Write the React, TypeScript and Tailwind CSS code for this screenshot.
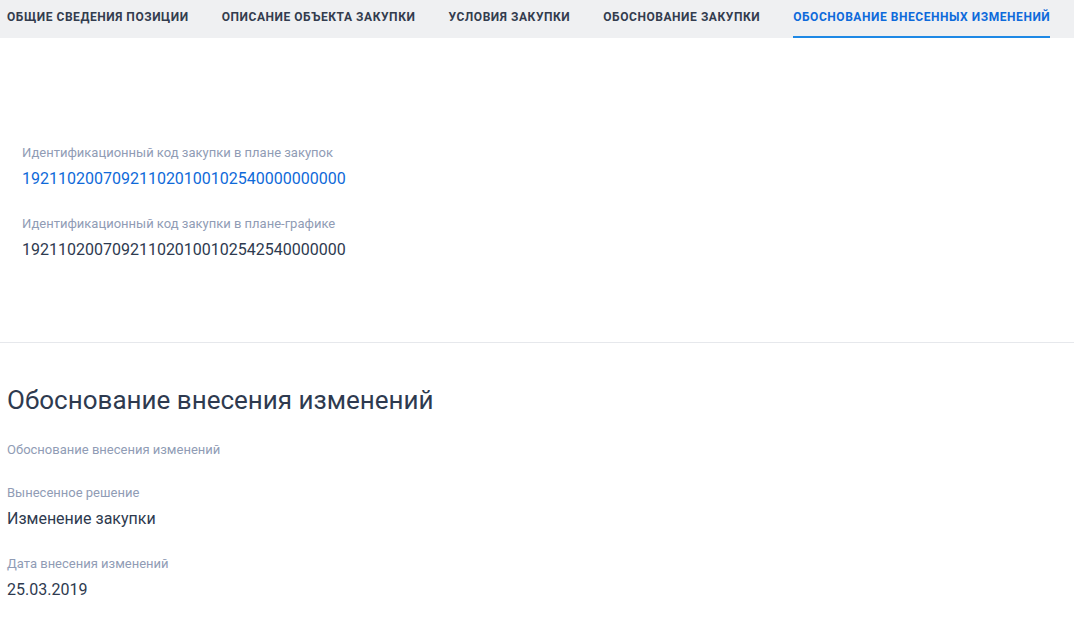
import React from "react";

const tabs = [
  "Общие сведения позиции",
  "Описание объекта закупки",
  "Условия закупки",
  "Обоснование закупки",
  "Обоснование внесенных изменений",
];

function Field({ label, value, blue }: { label: string; value?: string; blue?: boolean }) {
  return (
    <div>
      <div className="text-[13px] leading-[20px] text-[#909cb5]">{label}</div>
      {value && (
        <div className={`mt-[4px] text-[16px] leading-[24px] ${blue ? "text-[#0f6ad9]" : "text-[#2e3a4f]"}`}>
          {value}
        </div>
      )}
    </div>
  );
}

export default function App() {
  return (
    <div className="min-h-[633px] bg-white" style={{ fontFamily: "Roboto, 'Noto Sans', sans-serif" }}>
      <div className="flex h-[38px] bg-[#eff0f2] pl-[7px] gap-[33px]">
        {tabs.map((t, i) => (
          <div
            key={t}
            className={`flex h-full items-start pt-[9px] text-[12px] font-bold uppercase leading-[16px] tracking-[0.55px] ${
              i === 4 ? "text-[#0d6adb] border-b-2 border-[#1e88e5]" : "text-[#333c4e]"
            }`}
          >
            {t}
          </div>
        ))}
      </div>
      <div className="px-[22px] pt-[105px] pb-[80px] flex flex-col gap-[23px]">
        <Field label="Идентификационный код закупки в плане закупок" value="192110200709211020100102540000000000" blue />
        <Field label="Идентификационный код закупки в плане-графике" value="192110200709211020100102542540000000" />
      </div>
      <div className="border-t border-[#e6e8ec] px-[7px] pt-[41px]">
        <h2 className="text-[26px] leading-[32px] font-normal text-[#2e3a4f]">Обоснование внесения изменений</h2>
        <div className="mt-[24px] flex flex-col gap-[23px]">
          <Field label="Обоснование внесения изменений" />
          <Field label="Вынесенное решение" value="Изменение закупки" />
          <Field label="Дата внесения изменений" value="25.03.2019" />
        </div>
      </div>
    </div>
  );
}
